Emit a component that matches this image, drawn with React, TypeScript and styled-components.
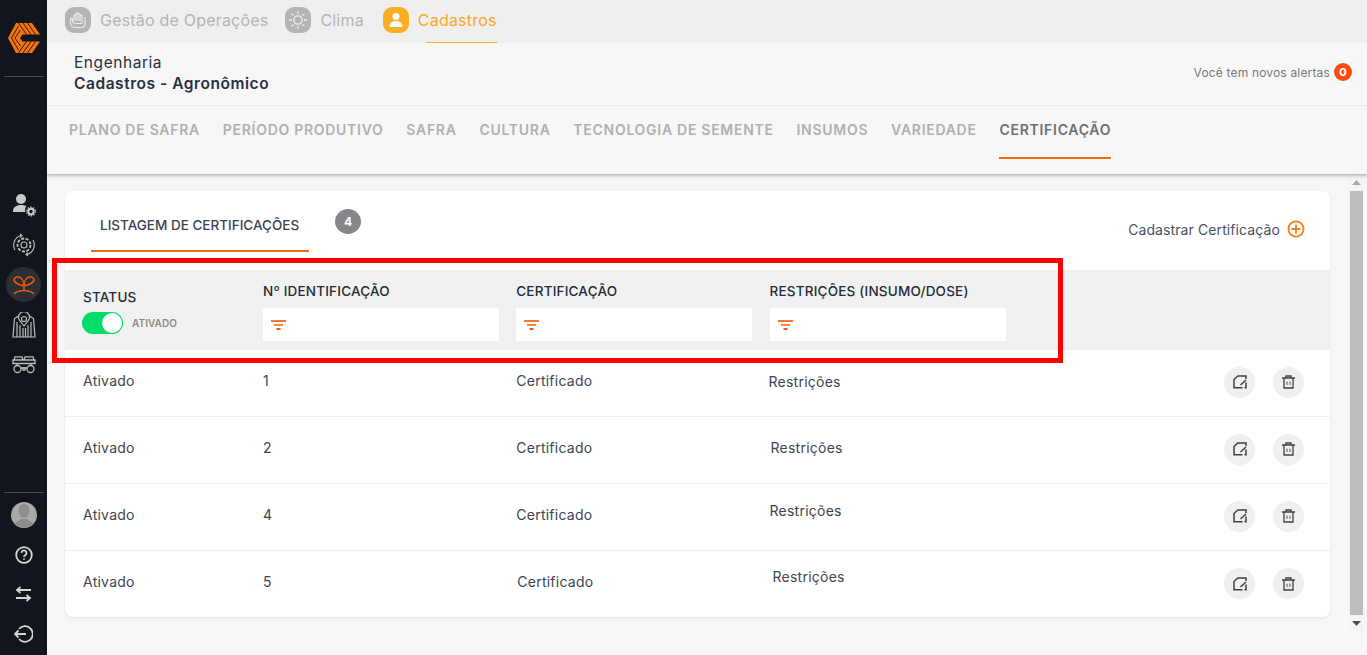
import React from "react";
import styled, { createGlobalStyle } from "styled-components";

const Global = createGlobalStyle`
  html, body { margin: 0; padding: 0; height: 100%; overflow: hidden; background: #f7f7f7; }
  #root { height: 100%; }
  * { box-sizing: border-box; }
  body { font-family: Inter, "Noto Sans", sans-serif; }
`;

const Page = styled.div`display: flex; width: 1367px; height: 655px; overflow: hidden; position: relative;`;
const Rail = styled.aside`
  width: 47px; flex: none; background: #11161d; display: flex; flex-direction: column; align-items: center;
`;
const LogoBox = styled.div`height: 76px; width: 100%; display: flex; justify-content: center; align-items: center;`;
const RailLine = styled.div`width: 40px; height: 1px; background: #4a4e54; flex: none;`;
const RailGroup = styled.div`margin-top: 110px; display: flex; flex-direction: column; align-items: center;`;
const RailItem = styled.div<{ $active?: boolean }>`
  width: 35px; height: 35px; border-radius: 50%; display: flex; align-items: center; justify-content: center;
  background: ${p => (p.$active ? "#2b2e33" : "transparent")}; margin-bottom: 5px;
`;
const RailBottom = styled.div`margin-top: auto; width: 100%; display: flex; flex-direction: column; align-items: center; padding-bottom: 1px;`;
const Avatar = styled.div`width: 26px; height: 26px; border-radius: 50%; background: #a9a9a9; overflow: hidden; margin: 9px 0 7px;`;
const BottomIcon = styled.div<{ $h?: number }>`height: ${p => p.$h ?? 39}px; display: flex; align-items: center; justify-content: center; width: 100%;`;

const Main = styled.main`flex: 1; min-width: 0; display: flex; flex-direction: column;`;
const TopNav = styled.nav`height: 43px; background: #efefef; display: flex; align-items: flex-start; padding-left: 18px;`;
const NavItem = styled.div<{ $active?: boolean; $gap?: number }>`
  display: flex; align-items: center; height: 43px; margin-right: ${p => p.$gap ?? 18}px; position: relative;
  color: ${p => (p.$active ? "#f9a825" : "#b4b4b4")}; font-size: 16px; letter-spacing: .2px;
`;
const NavIcon = styled.span<{ $active?: boolean }>`
  width: 26px; height: 26px; border-radius: 9px; margin-right: 9px; margin-top: -3px;
  background: ${p => (p.$active ? "#fbae25" : "#b4b4b4")}; display: flex; align-items: center; justify-content: center;
`;
const NavText = styled.span`margin-top: -3px; white-space: nowrap;`;
const NavUnderline = styled.span`position: absolute; left: 43px; right: 0; bottom: 0; height: 1px; background: #fbae25;`;

const TitleBar = styled.header`
  height: 63px; flex: none; background: #f7f7f7; border-bottom: 1px solid #eeeeee; display: flex; justify-content: space-between;
  padding: 9px 15px 0 27px;
`;
const Titles = styled.div`color: #27303f; font-size: 15.5px; line-height: 21px; letter-spacing: .55px;`;
const Strong = styled.div`font-weight: 600;`;
const Alerts = styled.div`display: flex; align-items: center; height: 20px; margin-top: 10px; color: #7a7a7a; font-size: 12px; letter-spacing: .17px; gap: 4px;`;
const AlertBadge = styled.span`width: 18px; height: 18px; border-radius: 50%; background: #fb4a12; color: #fff; font-size: 11px; font-weight: 700; display: flex; align-items: center; justify-content: center;`;

const Tabs = styled.div`
  height: 68px; flex: none; background: #f7f7f7; box-shadow: 0 2px 3px rgba(0,0,0,.25); display: flex; padding-left: 22px; gap: 22.8px; position: relative; z-index: 1;
`;
const Tab = styled.div<{ $active?: boolean }>`
  height: 53px; padding-top: 15px; font-size: 14px; font-weight: 600; letter-spacing: .72px; white-space: nowrap;
  color: ${p => (p.$active ? "#6f6f6f" : "#b0b0b0")};
  border-bottom: 2px solid ${p => (p.$active ? "#f26a0a" : "transparent")};
`;

const Content = styled.div`flex: 1; display: flex; min-height: 0;`;
const Scrollable = styled.div`flex: 1; padding: 17px 0 0 18px; min-width: 0;`;
const Card = styled.section`background: #fff; border-radius: 8px; box-shadow: 0 1px 3px rgba(0,0,0,.07); height: 426px; width: 1265px; overflow: hidden;`;
const CardHead = styled.div`height: 79px; display: flex; padding-left: 26px; position: relative;`;
const ListTab = styled.div`width: 218px; height: 61px; border-bottom: 2px solid #f56d09; padding: 26px 0 0 9px; color: #3a4352; font-size: 13.5px; font-weight: 500; white-space: nowrap;`;
const CountBadge = styled.span`width: 26px; height: 25px; border-radius: 50%; background: #85878a; color: #fff; font-size: 12px; font-weight: 700; display: flex; align-items: center; justify-content: center; margin: 18px 0 0 26px;`;
const AddLink = styled.div`margin-left: auto; margin-right: 25px; margin-top: 28px; height: 20px; display: flex; align-items: center; gap: 7px; color: #4a5260; font-size: 14px; letter-spacing: .1px;`;

const FilterRow = styled.div`height: 80px; background: #f1f1f1; display: grid; grid-template-columns: 180px 253.25px 253.25px 1fr; padding-left: 18px;`;
const FilterCell = styled.div`display: flex; flex-direction: column; padding-top: 11px;`;
const StatusCell = styled(FilterCell)`padding-top: 17px;`;
const HeadLabel = styled.div`color: #232b38; font-size: 13.5px; font-weight: 500; line-height: 20px; white-space: nowrap; letter-spacing: .2px;`;
const FilterInput = styled.div`width: 236px; height: 33px; background: #fff; margin-top: 7px; display: flex; align-items: center; padding-left: 8px;`;
const ToggleRow = styled.div`display: flex; align-items: center; gap: 9px; margin: 5px 0 0 -1px;`;
const Toggle = styled.div`width: 41px; height: 22px; border-radius: 11px; background: #00dd68; position: relative;`;
const Knob = styled.span`position: absolute; right: 1px; top: 1px; width: 20px; height: 20px; border-radius: 50%; background: #fff;`;
const ToggleLabel = styled.span`color: #8a8a8a; font-size: 10px; font-weight: 600; letter-spacing: .08px;`;

const Row = styled.div`height: 67px; display: grid; grid-template-columns: 180px 253.25px 253.25px 1fr auto; padding: 0 26px 6px 18px; align-items: center; border-bottom: 1px solid #efefef; color: #3d4552; font-size: 14px; letter-spacing: .25px; &:last-child { border-bottom: 0; }`;
const Nudge = styled.span<{ $x?: number; $y?: number }>`display: inline-block; transform: translate(${p => p.$x ?? 0}px, ${p => p.$y ?? 0}px);`;
const Actions = styled.div`display: flex; gap: 18px; margin-top: 4px;`;
const RoundBtn = styled.button`width: 31px; height: 31px; border: 0; border-radius: 50%; background: #f0f0f0; padding: 0; display: flex; align-items: center; justify-content: center;`;

const ScrollTrack = styled.div`width: 17px; flex: none; margin-right: 2px; display: flex; flex-direction: column; align-items: center; background: #f5f5f5; height: 458px;`;
const ScrollUp = styled.div`height: 17px; display: flex; align-items: center; justify-content: center; width: 100%;`;
const ScrollThumb = styled.div`width: 13px; flex: 1; background: #bdbdbd;`;

const Logo = () => (
  <svg width="32" height="30" viewBox="0 0 32 30" style={{ marginTop: -1 }}>
    <path d="M8 0H24L32 11.500H14.500L12 15L14.500 18.500H32L24 30H8L0 15Z" fill="#f4730c" />
    <g stroke="#11161d" strokeWidth=".9" fill="none">
      <path d="M15 0l8 11.500M19.500 0l8 11.500M10.500 0l8 11.500" />
      <path d="M15 30l8-11.500M19.500 30l8-11.500M10.500 30l8-11.500" />
      <path d="M3.500 15L10.500 3M7 15L12.500 7M3.500 15L10.500 27M7 15L12.500 23" />
    </g>
  </svg>
);
const stroke = "#bdbdbd";
const UserGear = () => (
  <svg width="24" height="24" viewBox="0 0 24 24" fill="#c9c9c9"><circle cx="9" cy="6" r="5" /><path d="M1 19c0-5 3-7 8-7 2 0 4 .4 5.500 1.300-1.500 1.500-2 3.700-1 5.700z" /><circle cx="19" cy="18.500" r="2.700" fill="none" stroke="#c9c9c9" strokeWidth="2" /><circle cx="19" cy="18.500" r="4.300" fill="none" stroke="#c9c9c9" strokeWidth="1.300" strokeDasharray="1.500 1.200" /></svg>
);
const GearCycle = () => (
  <svg width="24" height="24" viewBox="0 0 24 24" fill="none" stroke={stroke} strokeWidth="1.100"><circle cx="12" cy="12" r="3" /><circle cx="12" cy="12" r="6.500" strokeDasharray="3 1.500" strokeWidth="1.800"/><path d="M3 17A10 10 0 0 1 9 2.500M21 7a10 10 0 0 1-6 14.500" /><path d="M8 1l2 1.500L8 4.500M16 23l-2-1.500 2-2" /></svg>
);
const Sprout = () => (
  <svg width="22" height="20" viewBox="0 0 22 20" fill="none" stroke="#f0590e" strokeWidth="1.500"><path d="M11 11C7 10 2 9 1 5c0-2 3-4 5-3 3 1 5 5 5 9zM11 11c4-1 9-2 10-6 0-2-3-4-5-3-3 1-5 5-5 9zM11 11v5M1 19c3-3 7-3.500 10-3.500s7 .5 10 3.500" /></svg>
);
const Silo = () => (
  <svg width="24" height="26" viewBox="0 0 24 26" fill="none" stroke={stroke} strokeWidth="1.200"><circle cx="12" cy="7" r="2.500" /><path d="M12 14L8 9a5.500 5.500 0 1 1 8 0zM6.500 4L2.500 6.500 1 25h22L21.500 6.500 17.500 4M5 10v15M8 13v12M11 16v9M13.500 16v9M16 13v12M19 10v15" /></svg>
);
const Machine = () => (
  <svg width="24" height="18" viewBox="0 0 24 18" fill="none" stroke={stroke} strokeWidth="1.300"><path d="M3 .8h7l1 3.200H2zM13 .8h8l1 3.200H12zM1 4h22v3.500H1zM5 7.500v2M19 7.500v2M9 12h6" /><circle cx="5.500" cy="13" r="3.500" /><circle cx="18.500" cy="13" r="3.500" /><circle cx="12" cy="13" r="1.300" /></svg>
);
const Funnel = () => (
  <svg width="15" height="10" viewBox="0 0 15 10"><rect x="0" y="0" width="15" height="2" fill="#f9743a" /><rect x="3" y="4" width="9" height="2" fill="#f98a3a" /><rect x="5.500" y="8" width="4" height="2" fill="#f15a0a" /></svg>
);
const EditIcon = () => (
  <svg width="14" height="14" viewBox="0 0 14 14" fill="none" stroke="#3f3f3f" strokeWidth="1.500"><path d="M9.500 12.800H1V4.500L4.800 1H13v3" /><path d="M13 7.500v5.300h-1.500M13 5L7.500 10" /></svg>
);
const TrashIcon = () => (
  <svg width="13" height="14" viewBox="0 0 13 14" fill="none" stroke="#3f3f3f" strokeWidth="1.300"><path d="M0 3h13M4 3V1h5v2M2 3v10h9V3" /><path d="M5 6.500v3.500M8 6.500v3.500" stroke="#777" /></svg>
);
const Person = () => (
  <svg width="26" height="26" viewBox="0 0 26 26"><ellipse cx="13" cy="9" rx="5.500" ry="7" fill="#8e8e8e" /><path d="M2 26c1-7 6-7 8-9h6c2 2 7 2 8 9z" fill="#8e8e8e" /></svg>
);
const Help = () => (
  <svg width="18" height="18" viewBox="0 0 18 18" fill="none" stroke="#d4d4d4" strokeWidth="1.800"><circle cx="9" cy="9" r="7.800" /><path d="M6.500 7a2.500 2.500 0 1 1 3.800 2.100c-.9.500-1.300 1-1.300 1.900" /><path d="M9 12.500v1.200" /></svg>
);
const Swap = () => (
  <svg width="17" height="16" viewBox="0 0 17 16" fill="none" stroke="#d4d4d4" strokeWidth="1.800"><path d="M16 4H2M5.500 1L2 4l3.500 3M1 12h14M11.500 9L15 12l-3.500 3" /></svg>
);
const Logout = () => (
  <svg width="19" height="18" viewBox="0 0 19 18" fill="none" stroke="#d4d4d4" strokeWidth="1.800"><path d="M5 4a7.800 7.800 0 1 1 0 10" /><path d="M12 9H1M4.500 5.500L1 9l3.500 3.500" /></svg>
);
const Plus = () => (
  <svg width="18" height="18" viewBox="0 0 18 18" fill="none" stroke="#f57c14" strokeWidth="1.800"><circle cx="9" cy="9" r="7.600" /><path d="M9 4.500v9M4.500 9h9" /></svg>
);
const NavGlyphHand = () => (
  <svg width="20" height="20" viewBox="0 0 20 20" fill="none" stroke="#efefef" strokeWidth="1.100"><path d="M6 11V5.500a1 1 0 0 1 2 0V11M8 11V3.500a1 1 0 0 1 2 0V11M10 11V4.500a1 1 0 0 1 2 0V11M12 11V6a1 1 0 0 1 2 0v7M2.500 9v4c0 3 2.500 4.500 5 4.500h6c2 0 3.500-1.500 3.500-3.500v-7M2.500 9c0-1 2-1 2 0v3c1 1.500 3 1.500 4.500 1.500h5" /></svg>
);
const NavGlyphSun = () => (
  <svg width="20" height="20" viewBox="0 0 20 20" fill="none" stroke="#efefef" strokeWidth="1.300"><circle cx="10" cy="10" r="4.200" /><path d="M10 1v3M10 16v3M1 10h3M16 10h3M3.600 3.600l2 2M14.400 14.400l2 2M16.400 3.600l-2 2M5.600 14.400l-2 2" /></svg>
);
const NavGlyphUser = () => (
  <svg width="16" height="16" viewBox="0 0 16 16" fill="#fff"><circle cx="8" cy="4.500" r="3.500" /><path d="M1.500 15c0-4 3-6 6.500-6s6.500 2 6.500 6z" /></svg>
);

const rows = [
  { id: "1", rx: -1, ry: 1, cx: 0 },
  { id: "2", rx: 1, ry: 0, cx: 0 },
  { id: "4", rx: 0, ry: -4, cx: 0 },
  { id: "5", rx: 3, ry: -5, cx: 1 },
];
const tabs = ["PLANO DE SAFRA", "PERÍODO PRODUTIVO", "SAFRA", "CULTURA", "TECNOLOGIA DE SEMENTE", "INSUMOS", "VARIEDADE"];
const heads = ["Nº IDENTIFICAÇÃO", "CERTIFICAÇÃO", "RESTRIÇÕES (INSUMO/DOSE)"];

const Highlight = styled.div`position: absolute; left: 52px; top: 258px; width: 1011px; height: 105px; border: 5px solid #ff0000; pointer-events: none; z-index: 5;`;

export default function App() {
  return (
    <Page>
      <Global />
      <Rail>
        <LogoBox><Logo /></LogoBox>
        <RailLine />
        <RailGroup>
          <RailItem><UserGear /></RailItem>
          <RailItem><GearCycle /></RailItem>
          <RailItem $active><Sprout /></RailItem>
          <RailItem><Silo /></RailItem>
          <RailItem><Machine /></RailItem>
        </RailGroup>
        <RailBottom>
          <RailLine />
          <Avatar><Person /></Avatar>
          <BottomIcon><Help /></BottomIcon>
          <BottomIcon><Swap /></BottomIcon>
          <BottomIcon $h={41}><Logout /></BottomIcon>
        </RailBottom>
      </Rail>
      <Main>
        <TopNav>
          <NavItem $gap={17}><NavIcon><NavGlyphHand /></NavIcon><NavText>Gestão de Operações</NavText></NavItem>
          <NavItem $gap={19}><NavIcon><NavGlyphSun /></NavIcon><NavText>Clima</NavText></NavItem>
          <NavItem $active><NavIcon $active><NavGlyphUser /></NavIcon><NavText>Cadastros</NavText><NavUnderline /></NavItem>
        </TopNav>
        <TitleBar>
          <Titles>Engenharia<Strong>Cadastros - Agronômico</Strong></Titles>
          <Alerts>Você tem novos alertas<AlertBadge>0</AlertBadge></Alerts>
        </TitleBar>
        <Tabs>
          {tabs.map(t => <Tab key={t}>{t}</Tab>)}
          <Tab $active>CERTIFICAÇÃO</Tab>
        </Tabs>
        <Content>
          <Scrollable>
            <Card>
              <CardHead>
                <ListTab>LISTAGEM DE CERTIFICAÇÕES</ListTab>
                <CountBadge>4</CountBadge>
                <AddLink>Cadastrar Certificação<Plus /></AddLink>
              </CardHead>
              <FilterRow>
                <StatusCell>
                  <HeadLabel>STATUS</HeadLabel>
                  <ToggleRow><Toggle><Knob /></Toggle><ToggleLabel>ATIVADO</ToggleLabel></ToggleRow>
                </StatusCell>
                {heads.map(h => (
                  <FilterCell key={h}>
                    <HeadLabel>{h}</HeadLabel>
                    <FilterInput><Funnel /></FilterInput>
                  </FilterCell>
                ))}
              </FilterRow>
              {rows.map(r => (
                <Row key={r.id}>
                  <span>Ativado</span>
                  <span>{r.id}</span>
                  <Nudge $x={r.cx}>Certificado</Nudge>
                  <Nudge $x={r.rx} $y={r.ry}>Restrições</Nudge>
                  <Actions>
                    <RoundBtn aria-label="Editar"><EditIcon /></RoundBtn>
                    <RoundBtn aria-label="Excluir"><TrashIcon /></RoundBtn>
                  </Actions>
                </Row>
              ))}
            </Card>
          </Scrollable>
          <ScrollTrack>
            <ScrollUp><svg width="9" height="5" viewBox="0 0 9 5"><path d="M4.500 0L9 5H0z" fill="#a8a8a8" /></svg></ScrollUp>
            <ScrollThumb />
            <ScrollUp><svg width="9" height="5" viewBox="0 0 9 5"><path d="M4.500 5L9 0H0z" fill="#505050" /></svg></ScrollUp>
          </ScrollTrack>
        </Content>
      </Main>
      <Highlight />
    </Page>
  );
}
